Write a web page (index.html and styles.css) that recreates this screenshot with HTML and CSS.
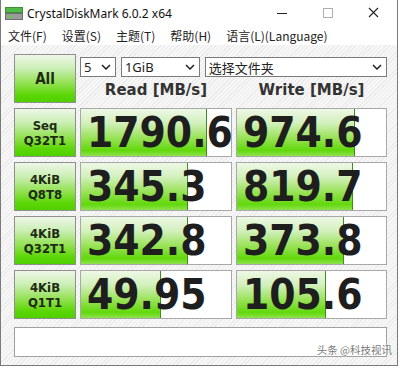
FILE: index.html
```html
<!DOCTYPE html>
<html lang="zh-CN">
<head>
  <meta charset="UTF-8">
  <title>CrystalDiskMark 6.0.2 x64</title>
  <link rel="stylesheet" href="styles.css">
</head>
<body>

  <div class="window">
    <div class="titlebar">
      <svg class="app-icon" width="18" height="13" viewBox="0 0 18 13">
        <rect x="0.5" y="0.5" width="17" height="5" fill="#52b84a" stroke="#3d8f36"/>
        <rect x="0.5" y="6.5" width="17" height="6" fill="#9a9a9a" stroke="#6e6e6e"/>
        <rect x="3" y="8.5" width="4" height="2" fill="#5fd040"/>
      </svg>
      <span class="title">CrystalDiskMark 6.0.2 x64</span>
      <div class="win-controls">
        <svg width="46" height="26" viewBox="0 0 46 26"><line x1="18" y1="13.5" x2="28" y2="13.5" stroke="#222" stroke-width="1"/></svg>
        <svg width="46" height="26" viewBox="0 0 46 26"><rect x="18.5" y="8.5" width="9" height="9" fill="none" stroke="#b0b0b0"/></svg>
        <svg width="46" height="26" viewBox="0 0 46 26"><path d="M18 8 L27 17 M27 8 L18 17" stroke="#222" stroke-width="1.1"/></svg>
      </div>
    </div>

    <div class="menubar">
      <span>文件(F)</span>
      <span>设置(S)</span>
      <span>主题(T)</span>
      <span>帮助(H)</span>
      <span>语言(L)(Language)</span>
    </div>

    <div class="main">
      <div class="grid">
        <div class="btn all">All</div>
        <div class="top-cell">
          <div class="selects">
            <div class="combo c-count"><span>5</span><svg class="chev" width="10" height="6" viewBox="0 0 10 6"><path d="M1 1 L5 5 L9 1" fill="none" stroke="#222" stroke-width="1.5"/></svg></div>
            <div class="combo c-size"><span>1GiB</span><svg class="chev" width="10" height="6" viewBox="0 0 10 6"><path d="M1 1 L5 5 L9 1" fill="none" stroke="#222" stroke-width="1.5"/></svg></div>
            <div class="combo c-drive"><span>选择文件夹</span><svg class="chev" width="10" height="6" viewBox="0 0 10 6"><path d="M1 1 L5 5 L9 1" fill="none" stroke="#222" stroke-width="1.5"/></svg></div>
          </div>
          <div class="heads">
            <div>Read [MB/s]</div>
            <div>Write [MB/s]</div>
          </div>
        </div>

        <div class="btn label">Seq<br>Q32T1</div>
        <div class="value"><div class="bar" style="width: 84%"></div><span>1790.6</span></div>
        <div class="value"><div class="bar" style="width: 79.5%"></div><span>974.6</span></div>

        <div class="btn label">4KiB<br>Q8T8</div>
        <div class="value"><div class="bar" style="width: 71%"></div><span>345.3</span></div>
        <div class="value"><div class="bar" style="width: 78%"></div><span>819.7</span></div>

        <div class="btn label">4KiB<br>Q32T1</div>
        <div class="value"><div class="bar" style="width: 71%"></div><span>342.8</span></div>
        <div class="value"><div class="bar" style="width: 71.5%"></div><span>373.8</span></div>

        <div class="btn label">4KiB<br>Q1T1</div>
        <div class="value"><div class="bar" style="width: 53%"></div><span>49.95</span></div>
        <div class="value"><div class="bar" style="width: 60%"></div><span>105.6</span></div>
      </div>

      <div class="comment"></div>
    </div>

    <div class="watermark">头条 @科技视讯</div>
  </div>

</body>
</html>
```

FILE: styles.css
```css
body {
  margin: 0;
  background: #ffffff;
  font-family: "Noto Sans CJK SC", "Noto Sans", sans-serif;
  color: #222;
}

.window {
  position: relative;
  width: 396px;
  height: 365px;
  border: 1px solid #7a7a7a;
  border-top: none;
  background: #ffffff;
  display: flex;
  flex-direction: column;
}

.titlebar {
  height: 26px;
  display: flex;
  align-items: center;
  background: #ffffff;
}

.app-icon {
  margin-left: 4px;
  margin-right: 4px;
}

.title {
  font-family: "Noto Sans", sans-serif;
  font-size: 12px;
  color: #111;
}

.win-controls {
  margin-left: auto;
  display: flex;
  align-self: flex-start;
}

.menubar {
  height: 19px;
  display: flex;
  align-items: center;
  padding-left: 7px;
  gap: 15px;
  font-size: 12px;
  background: #ffffff;
}

.main {
  flex: 1;
  padding: 9px 9px 0 13px;
  background-color: #f5f5f5;
  background-image: repeating-linear-gradient(135deg, #f7f7f7 0, #f7f7f7 2px, #ebebeb 2px, #ebebeb 3px);
}

.grid {
  display: grid;
  grid-template-columns: 62px 152px 151px;
  grid-auto-rows: 49px;
  column-gap: 4px;
  row-gap: 5px;
}

.btn {
  box-sizing: border-box;
  border: 1px solid #8f8f8f;
  background: linear-gradient(#eef7e8, #c9eeb2 30%, #8fe04c 62%, #5cd606 85%, #4fd000);
  display: flex;
  align-items: center;
  justify-content: center;
  text-align: center;
  font-family: "DejaVu Sans Condensed", "DejaVu Sans", sans-serif;
  font-weight: bold;
  color: #1e2a14;
}

.all {
  font-size: 15px;
}

.label {
  font-size: 13px;
  line-height: 15px;
}

.top-cell {
  grid-column: 2 / 4;
  display: flex;
  flex-direction: column;
}

.selects {
  margin-top: 3px;
  display: flex;
  gap: 5px;
}

.combo {
  box-sizing: border-box;
  height: 20px;
  border: 1px solid #7a7a7a;
  background: #ffffff;
  display: flex;
  align-items: center;
  padding: 0 4px 0 3px;
  font-size: 13px;
}

.combo span {
  flex: 1;
}

.c-count {
  width: 36px;
  font-family: "Noto Sans", sans-serif;
}

.c-size {
  width: 79px;
  font-family: "Noto Sans", sans-serif;
}

.c-drive {
  width: 183px;
}

.heads {
  flex: 1;
  display: grid;
  grid-template-columns: 152px 151px;
  column-gap: 4px;
  align-items: center;
  text-align: center;
  font-family: "DejaVu Sans", sans-serif;
  font-weight: bold;
  font-size: 15px;
  color: #333;
}

.value {
  position: relative;
  box-sizing: border-box;
  border: 1px solid #a8a8a8;
  background: #ffffff;
  display: flex;
  align-items: center;
  overflow: hidden;
}

.bar {
  position: absolute;
  left: 0;
  top: 0;
  bottom: 0;
  box-sizing: border-box;
  border-right: 1px solid #3f8a22;
  background: linear-gradient(#eef8e6, #d2f0bc 30%, #98e256 62%, #62d80c 88%, #8ee24e);
}

.value span {
  position: relative;
  padding-left: 6px;
  font-family: "DejaVu Sans Condensed", "DejaVu Sans", sans-serif;
  font-weight: bold;
  font-size: 42px;
  line-height: 1;
  color: #1e1e1e;
}

.comment {
  margin-top: 8px;
  width: 373px;
  height: 30px;
  box-sizing: border-box;
  border: 1px solid #a0a0a0;
  background: #ffffff;
}

.watermark {
  position: absolute;
  right: 5px;
  bottom: 8px;
  font-size: 10.5px;
  color: #7a7a7a;
  text-shadow: 0 0 2px #fff, 0 0 2px #fff;
}
```
